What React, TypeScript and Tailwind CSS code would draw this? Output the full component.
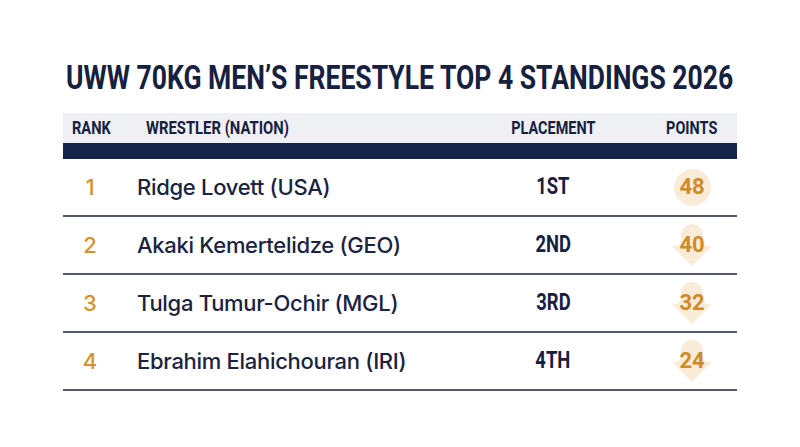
import React from 'react'

const rows = [
  { rank: 1, name: 'Ridge Lovett (USA)', place: '1ST', points: 48, badge: 'circle' },
  { rank: 2, name: 'Akaki Kemertelidze (GEO)', place: '2ND', points: 40, badge: 'arrow' },
  { rank: 3, name: 'Tulga Tumur-Ochir (MGL)', place: '3RD', points: 32, badge: 'arrow' },
  { rank: 4, name: 'Ebrahim Elahichouran (IRI)', place: '4TH', points: 24, badge: 'arrow' },
]

const roboto = { fontFamily: 'Roboto, "Liberation Sans", sans-serif' }
const inter = { fontFamily: 'Inter, "Noto Sans", sans-serif' }

function Badge({ kind, value }: { kind: string; value: number }) {
  return (
    <div className="relative flex h-[46px] w-[44px] items-center justify-center">
      {kind === 'circle' ? (
        <div className="absolute h-[37px] w-[37px] rounded-full bg-[#f8ecd9]" />
      ) : (
        <svg className="absolute inset-0" width="44" height="46" viewBox="0 0 44 46">
          <path
            d="M11 13 A11 11 0 0 1 33 13 L33 20 L36 24 L42 24 L22 44 L2 24 L8 24 L11 20 Z"
            fill="#f8ecd9"
          />
        </svg>
      )}
      <span className="relative text-[22px] font-bold leading-none text-[#d08a26]" style={roboto}>
        {value}
      </span>
    </div>
  )
}

export default function App() {
  return (
    <div className="flex h-[447px] w-[800px] flex-col items-center bg-white pt-[54px]">
      <h1
        className="inline-block scale-x-[0.78] whitespace-nowrap text-[34px] font-bold leading-[46px] text-[#15213f]"
        style={roboto}
      >
        UWW 70KG MEN’S FREESTYLE TOP 4 STANDINGS 2026
      </h1>

      <div className="mt-[13px] w-[674px]">
        <div
          className="grid h-[30px] grid-cols-[56px_1fr_140px_114px] items-center bg-[#eef0f4] text-[19px] font-bold text-[#15213f]"
          style={roboto}
        >
          <div className="pl-[9px]">
            <span className="inline-block origin-left scale-x-[0.77]">RANK</span>
          </div>
          <div className="pl-[27px]">
            <span className="inline-block origin-left scale-x-[0.78]">WRESTLER (NATION)</span>
          </div>
          <div className="text-center">
            <span className="inline-block scale-x-[0.76]">PLACEMENT</span>
          </div>
          <div className="pl-[24px] text-center">
            <span className="inline-block scale-x-[0.76]">POINTS</span>
          </div>
        </div>
        <div className="h-[16px] bg-[#14244a]" />

        {rows.map((r) => (
          <div
            key={r.rank}
            className="grid h-[58px] grid-cols-[56px_1fr_140px_114px] items-center border-b-2 border-[#55596d]"
          >
            <div className="pr-[2px] text-center text-[22px] font-medium text-[#d4922c]" style={inter}>
              {r.rank}
            </div>
            <div
              className="pl-[18px] text-[22px] font-medium tracking-[-0.3px] text-[#1a2340]"
              style={inter}
            >
              {r.name}
            </div>
            <div className="text-center text-[23px] font-bold text-[#15213f]" style={roboto}>
              <span className="inline-block scale-x-[0.8]">{r.place}</span>
            </div>
            <div className="flex justify-center pl-[24px]">
              <Badge kind={r.badge} value={r.points} />
            </div>
          </div>
        ))}
      </div>
    </div>
  )
}
